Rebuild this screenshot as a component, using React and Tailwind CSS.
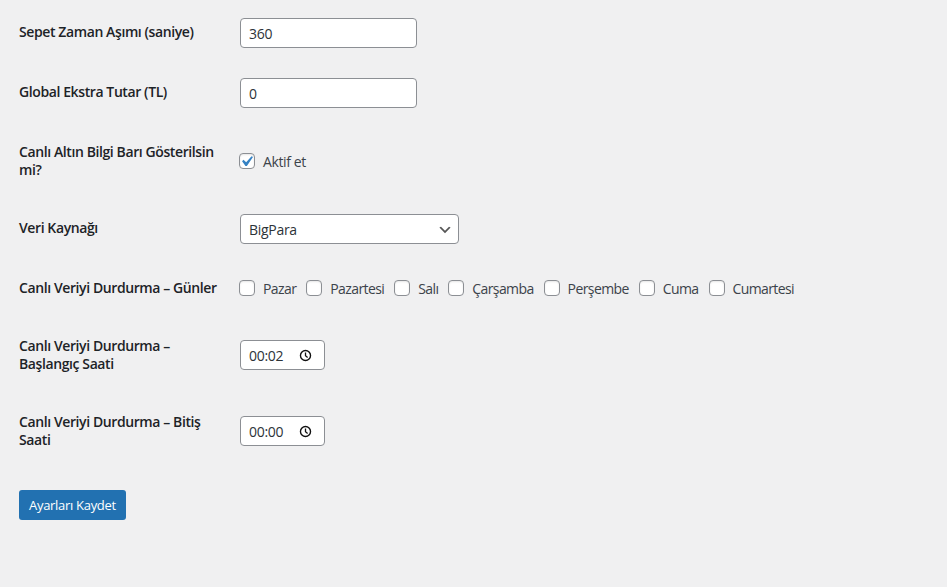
import React from 'react';

const font = { fontFamily: '"Open Sans", "Noto Sans", sans-serif' };

// WP style checkbox
const Checkbox = ({ checked }) => (
  <span className="relative inline-block w-4 h-4 shrink-0 rounded-[4px] border border-[#8c8f94] bg-white shadow-[inset_0_1px_2px_rgba(0,0,0,0.1)]">
    {checked && (
      <svg viewBox="0 0 20 20" className="absolute -top-[3px] -left-[4px] w-[21px] h-[21px]">
        <path d="M14.83 4.89l1.34.94-5.81 8.38H9.02L5.78 9.67l1.34-1.25 2.57 2.4z" fill="#3582c4" />
      </svg>
    )}
  </span>
);

const Row = ({ label, children }) => (
  <div className="flex">
    <div className="w-[211px] shrink-0 py-5 pr-[10px] text-[14px] leading-[18px] font-semibold tracking-[-0.4px] whitespace-nowrap text-[#1d2327]">
      {label}
    </div>
    <div className="flex items-center py-[15px] pl-[10px]">{children}</div>
  </div>
);

const TextBox = ({ value }) => (
  <div className="w-[177px] h-[30px] flex items-center px-2 rounded-[4px] border border-[#8c8f94] bg-white text-[14px] tracking-[-0.3px] text-[#2c3338]">
    {value}
  </div>
);

const TimeBox = ({ value }) => (
  <div className="w-[85px] h-[30px] flex items-center justify-between pl-2 pr-[12px] rounded-[4px] border border-[#8c8f94] bg-white text-[14px] tracking-[-0.3px] text-[#2c3338]">
    <span>{value}</span>
    <svg viewBox="0 0 16 16" className="w-[13px] h-[13px]">
      <circle cx="8" cy="8" r="6.2" fill="none" stroke="#111" strokeWidth="1.7" />
      <path d="M8 4.3V8.2L10.6 10.4" fill="none" stroke="#111" strokeWidth="1.6" />
    </svg>
  </div>
);

const days = ['Pazar', 'Pazartesi', 'Salı', 'Çarşamba', 'Perşembe', 'Cuma', 'Cumartesi'];

export default function App() {
  return (
    <div className="min-h-screen bg-[#f0f0f1] pl-[19px] pt-[3px]" style={font}>
      <Row label="Sepet Zaman Aşımı (saniye)">
        <TextBox value="360" />
      </Row>
      <Row label="Global Ekstra Tutar (TL)">
        <TextBox value="0" />
      </Row>
      <Row label={<>Canlı Altın Bilgi Barı Gösterilsin<br />mi?</>}>
        <label className="-ml-px flex items-center gap-2 text-[14px] tracking-[-0.4px] text-[#3c434a]">
          <Checkbox checked />
          Aktif et
        </label>
      </Row>
      <Row label="Veri Kaynağı">
        <div className="relative w-[219px] h-[30px] flex items-center pl-2 rounded-[4px] border border-[#8c8f94] bg-white text-[14px] tracking-[-0.3px] text-[#2c3338]">
          BigPara
          <svg viewBox="0 0 20 20" className="absolute right-[5px] top-[7px] w-4 h-4">
            <path d="M5 6l5 5 5-5 2 1-7 7-7-7 2-1z" fill="#555" />
          </svg>
        </div>
      </Row>
      <Row label="Canlı Veriyi Durdurma – Günler">
        <div className="-ml-px flex items-center gap-[10px]">
          {days.map((d) => (
            <label key={d} className="flex items-center gap-2 text-[14px] tracking-[-0.6px] text-[#3c434a]">
              <Checkbox />
              {d}
            </label>
          ))}
        </div>
      </Row>
      <Row label={<>Canlı Veriyi Durdurma –<br />Başlangıç Saati</>}>
        <TimeBox value="00:02" />
      </Row>
      <Row label={<>Canlı Veriyi Durdurma – Bitiş<br />Saati</>}>
        <TimeBox value="00:00" />
      </Row>
      <div className="mt-[21px]">
        <button
          type="button"
          className="h-[30px] px-[10px] rounded-[3px] bg-[#2271b1] text-white text-[13px] tracking-[-0.3px] leading-none"
          style={font}
        >
          Ayarları Kaydet
        </button>
      </div>
    </div>
  );
}
